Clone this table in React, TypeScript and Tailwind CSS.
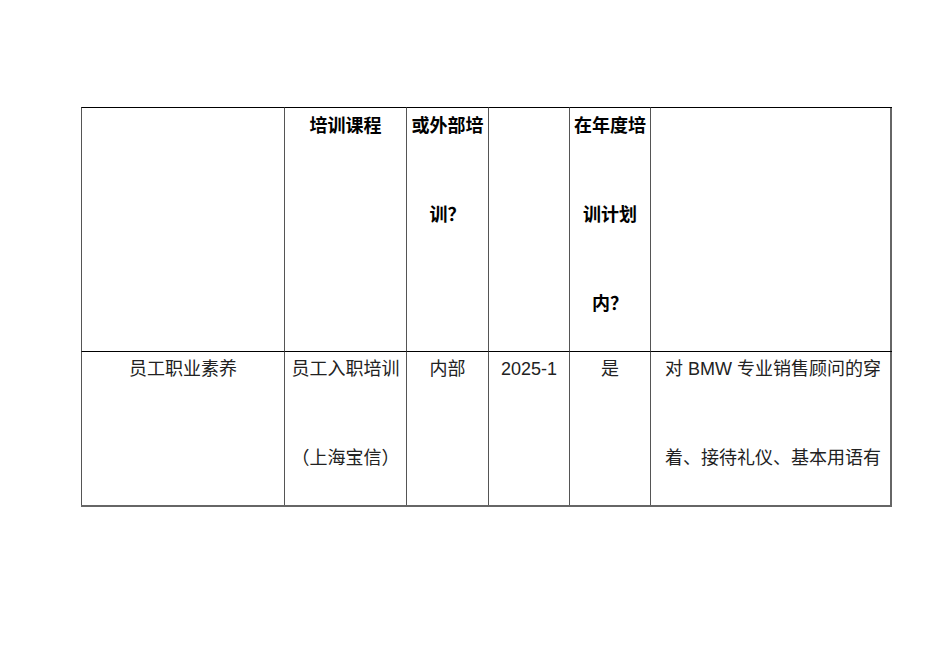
const font = { fontFamily: '"Liberation Sans", "Noto Sans CJK SC", sans-serif' };

const header: string[][] = [[], ["培训课程"], ["或外部培", "训？"], [], ["在年度培", "训计划", "内？"], []];

const body: string[][] = [
  ["员工职业素养"],
  ["员工入职培训", "（上海宝信）"],
  ["内部"],
  ["2025-1"],
  ["是"],
  ["对 BMW 专业销售顾问的穿", "着、接待礼仪、基本用语有"],
];

const Cell = ({ lines, head, last }: { lines: string[]; head?: boolean; last?: boolean }) => (
  <div
    className={`border-l border-t border-l-[#555] border-t-black flex flex-col gap-[71px] whitespace-nowrap leading-[18px] text-[18px] ${
      head ? "pt-[9px] font-bold text-black items-center" : "pt-[8px] text-[#222]"
    } ${last && !head ? "items-start pl-[14px]" : "items-center"}`}
  >
    {lines.map((l, i) => (
      <div key={i}>{l}</div>
    ))}
  </div>
);

export default function App() {
  return (
    <div className="w-[950px] h-[672px] bg-white pt-[107px] pl-[81px]" style={font}>
      <div className="grid w-[811px] grid-cols-[203px_122px_82px_81px_81px_242px] grid-rows-[244px_154px] border-r-2 border-b-2 border-r-[#666] border-b-[#666]">
        {header.map((lines, i) => (
          <Cell key={"h" + i} lines={lines} head last={i === 5} />
        ))}
        {body.map((lines, i) => (
          <Cell key={"b" + i} lines={lines} last={i === 5} />
        ))}
      </div>
    </div>
  );
}
